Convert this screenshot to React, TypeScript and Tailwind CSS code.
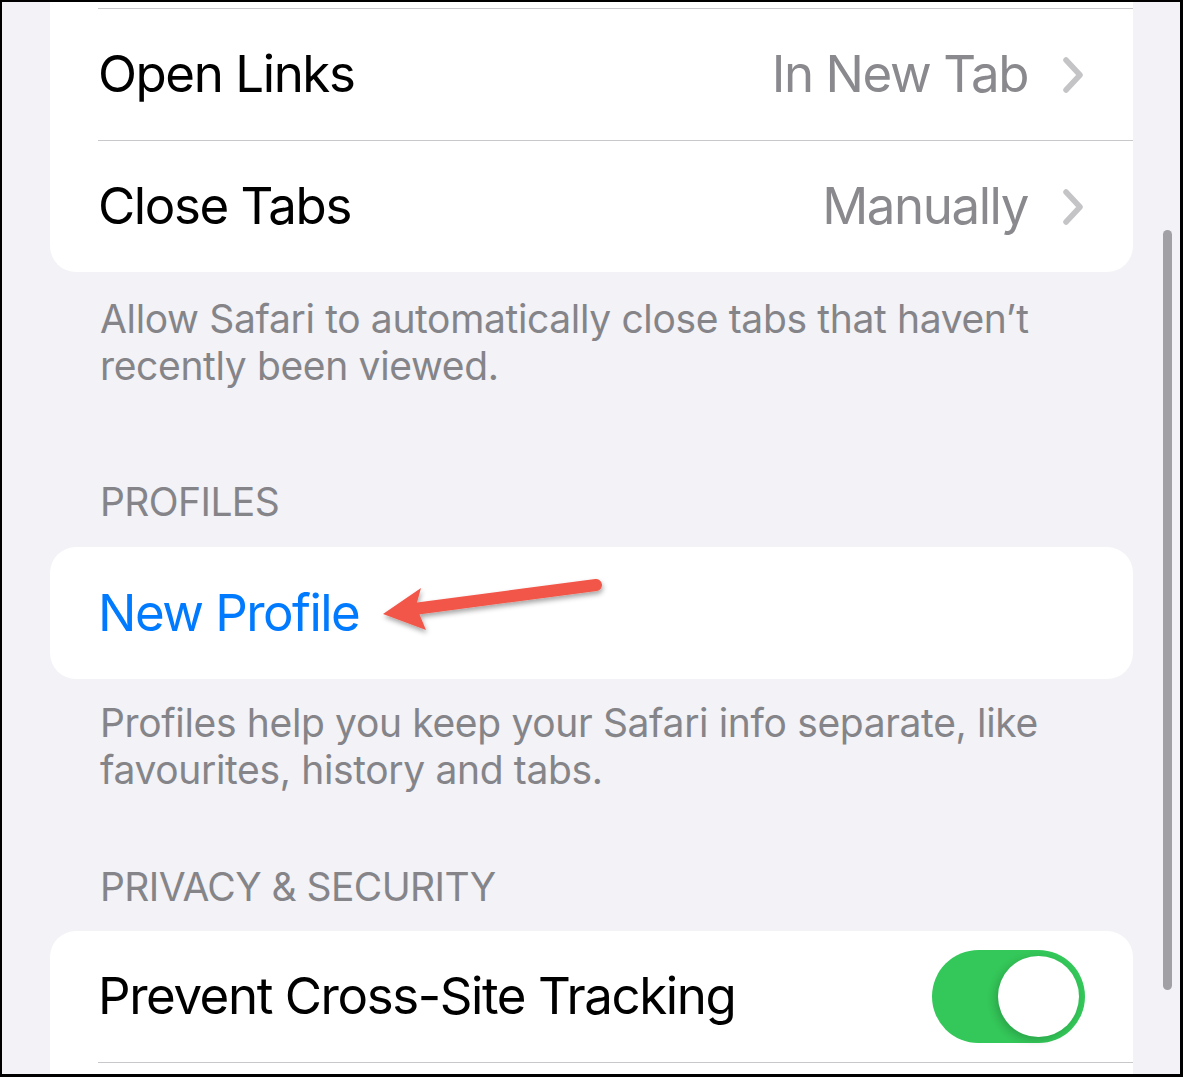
const font = { fontFamily: 'Inter, "Noto Sans", sans-serif' }

function Separator() {
  return <div className="ml-[48px] h-px bg-[#c8c8cc]" />
}

function Chevron() {
  return (
    <svg width="22" height="36" viewBox="0 0 22 36" className="shrink-0">
      <path d="M4 3 L18 18 L4 33" fill="none" stroke="#c4c4c7" strokeWidth="5.5" strokeLinecap="round" strokeLinejoin="round" />
    </svg>
  )
}

function ValueRow({ label, value }: { label: string; value: string }) {
  return (
    <div className="flex h-[131px] items-center justify-between pl-[48px] pr-[49px]">
      <span className="text-[51px] tracking-[-0.028em] text-black">{label}</span>
      <div className="flex items-center gap-[34px]">
        <span className="text-[51px] tracking-[-0.028em] text-[#8a8a8e]">{value}</span>
        <Chevron />
      </div>
    </div>
  )
}

function Toggle() {
  return (
    <div className="flex h-[93px] w-[153px] items-center justify-end rounded-full bg-[#34c759] p-[6px]">
      <div className="h-[81px] w-[81px] rounded-full bg-white shadow-[-3px_3px_8px_rgba(0,0,0,0.18)]" />
    </div>
  )
}

function Arrow() {
  return (
    <svg className="pointer-events-none absolute left-0 top-0" width="1183" height="1077" viewBox="0 0 1183 1077">
      <defs>
        <filter id="arrowShadow" x="-20%" y="-50%" width="140%" height="200%">
          <feDropShadow dx="1" dy="3" stdDeviation="2.5" floodColor="#000" floodOpacity="0.35" />
        </filter>
      </defs>
      <g filter="url(#arrowShadow)" fill="#f2574a">
        <line x1="412" y1="607" x2="594" y2="583" stroke="#f2574a" strokeWidth="12" strokeLinecap="round" />
        <path d="M381 612 L419 586 L414 604 L424 628 Z" />
      </g>
    </svg>
  )
}

export default function App() {
  return (
    <div
      className="relative h-[1077px] w-[1183px] overflow-hidden border-b-[3px] border-l-2 border-r-[3px] border-t-2 border-black bg-[#f2f2f7]"
      style={font}
    >
      <div className="ml-[48px] mr-[47px] rounded-b-[26px] bg-white">
        <div className="h-[6px]" />
        <Separator />
        <ValueRow label="Open Links" value="In New Tab" />
        <Separator />
        <ValueRow label="Close Tabs" value="Manually" />
      </div>

      <p className="pl-[98px] pr-[120px] pt-[23px] text-[39px] leading-[47px] tracking-[-0.009em] text-[#858589]">
        Allow Safari to automatically close tabs that haven’t recently been viewed.
      </p>

      <div className="mt-[89px] pl-[98px] text-[39px] leading-[47px] tracking-[-0.015em] text-[#858589]">PROFILES</div>

      <div className="ml-[48px] mr-[47px] mt-[22px] flex h-[132px] items-center rounded-[26px] bg-white pl-[48px]">
        <span className="text-[51px] tracking-[-0.03em] text-[#007aff]">New Profile</span>
      </div>

      <p className="pl-[98px] pr-[120px] pt-[20px] text-[39px] leading-[47px] tracking-[-0.009em] text-[#858589]">
        Profiles help you keep your Safari info separate, like favourites, history and tabs.
      </p>

      <div className="mt-[70px] pl-[98px] text-[39px] leading-[47px] tracking-[-0.015em] text-[#858589]">
        PRIVACY &amp; SECURITY
      </div>

      <div className="ml-[48px] mr-[47px] mt-[21px] h-[200px] rounded-t-[26px] bg-white">
        <div className="flex h-[131px] items-center justify-between pl-[48px] pr-[48px]">
          <span className="text-[51px] tracking-[-0.028em] text-black">Prevent Cross-Site Tracking</span>
          <Toggle />
        </div>
        <Separator />
      </div>

      {/* scroll indicator */}
      <div className="absolute left-[1161px] top-[228px] h-[760px] w-[9px] rounded-full bg-[#a1a1a5]" />

      <Arrow />
    </div>
  )
}
